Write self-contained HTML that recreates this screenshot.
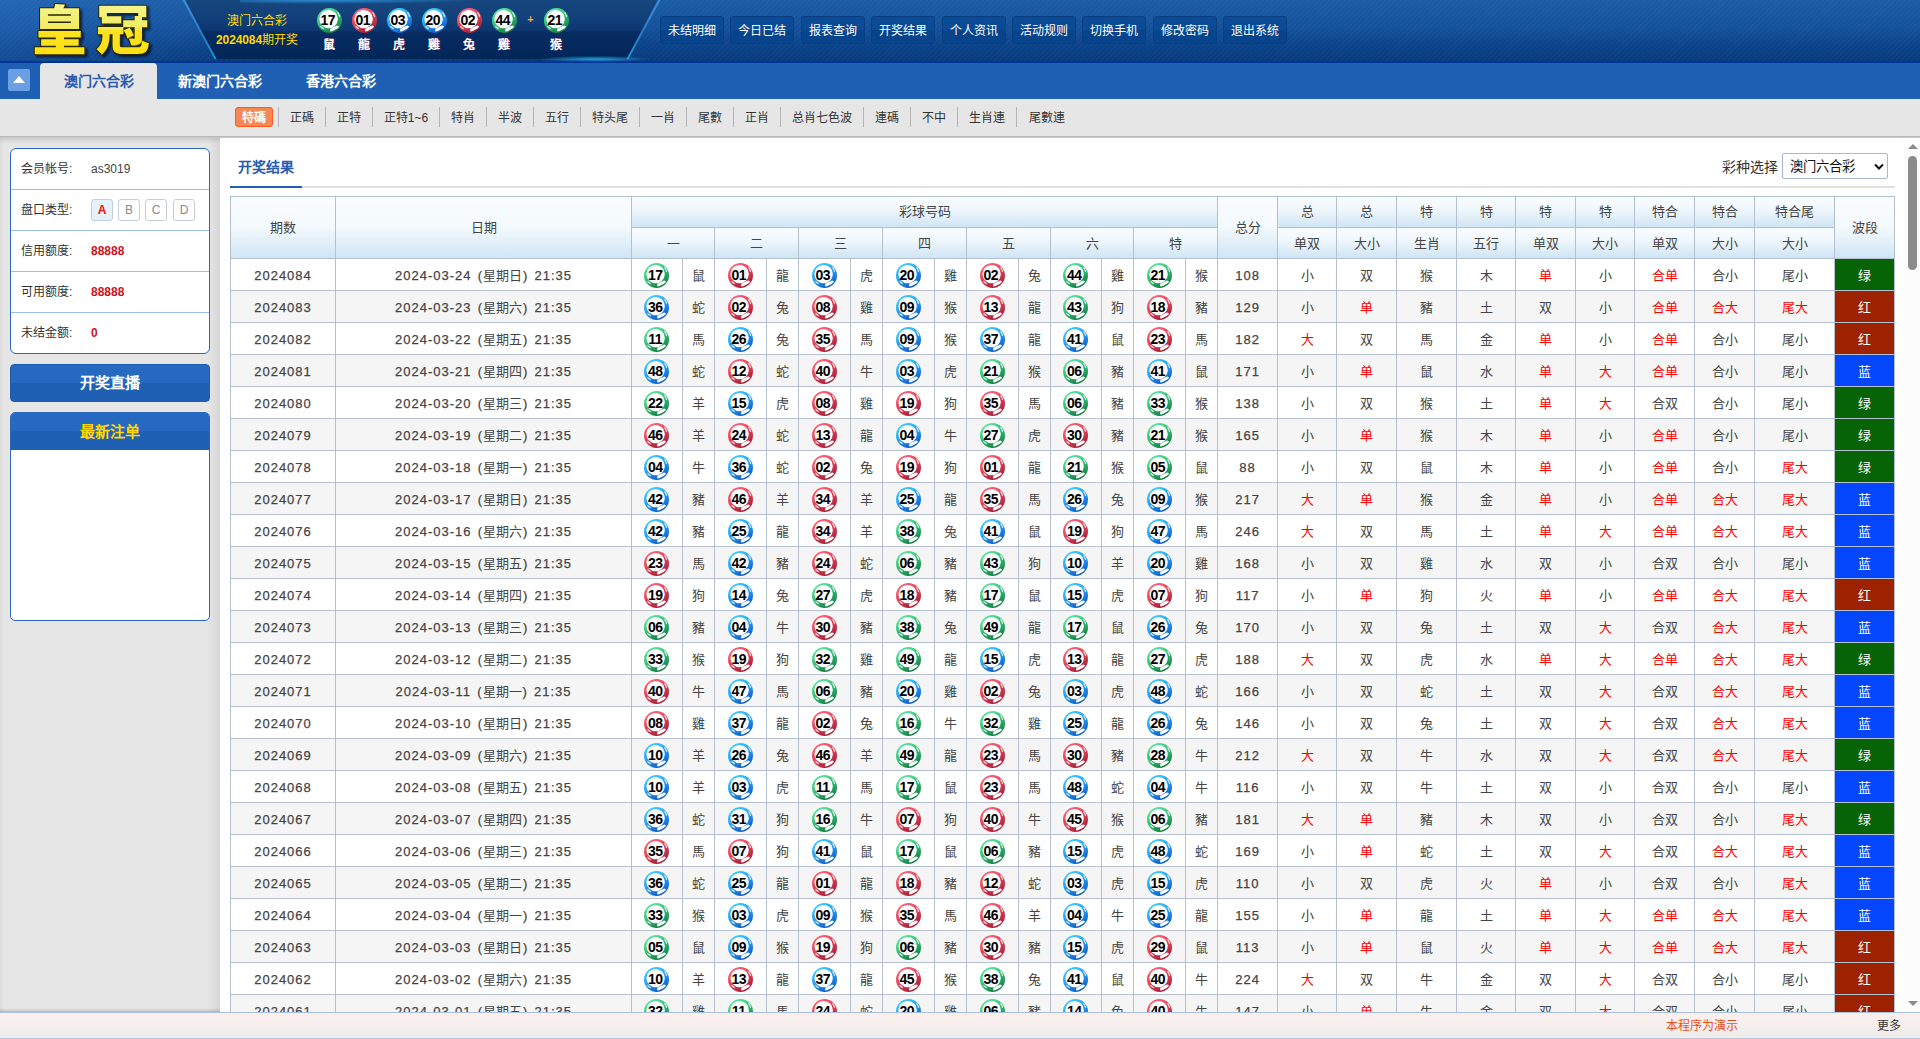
<!DOCTYPE html>
<html lang="zh-CN">
<head>
<meta charset="utf-8">
<title>皇冠</title>
<style>
*{box-sizing:border-box}
html,body{margin:0;padding:0;overflow:hidden}
body{width:1920px;height:1039px;overflow:hidden;position:relative;background:#e6e6e6;font-family:"Liberation Sans",sans-serif;font-size:12px;color:#444}
a{text-decoration:none;color:inherit}
i,em{font-style:normal}
/* ---------- header ---------- */
#hd{position:absolute;left:0;top:0;width:1920px;height:63px;background:#003399;overflow:hidden}
#hdbg{position:absolute;left:0;top:0;width:1920px;height:61px;
 background:repeating-linear-gradient(135deg,rgba(255,255,255,.025) 0,rgba(255,255,255,.025) 1.6px,rgba(255,255,255,0) 1.6px,rgba(255,255,255,0) 3.6px),linear-gradient(#1b5ca6 0,#14519b 45%,#0a4186 80%,#073a7b 100%)}
#hdl{position:absolute;left:0;top:0;width:230px;height:61px;background:linear-gradient(90deg,rgba(60,130,220,.25),rgba(60,130,220,.12) 60%,rgba(60,130,220,0))}
#pnE{position:absolute;left:180px;top:0;width:484px;height:61px;background:linear-gradient(#3d8fd6,#2a7ac8 60%,#1aa0e0);
 clip-path:polygon(2.5px 0,480.5px 0,448.5px 59px,34.5px 59px)}
#pn{position:absolute;left:180px;top:0;width:484px;height:60px;
 background:linear-gradient(#17477f 0,#12407a 30%,#0c3770 50%,#062c62 54%,#032658 100%);
 clip-path:polygon(5px 0,478px 0,446.5px 59px,36.5px 59px)}
#glow{position:absolute;left:240px;top:-4px;width:240px;height:8px;background:radial-gradient(ellipse at 35% 50%,rgba(50,160,235,.8) 0,rgba(50,160,235,.4) 35%,rgba(50,160,235,0) 70%)}
#glow2{position:absolute;left:540px;top:56px;width:110px;height:6px;background:radial-gradient(ellipse at center,rgba(40,175,230,.85) 0,rgba(40,175,230,.35) 45%,rgba(40,175,230,0) 72%)}
#logo{position:absolute;left:0;top:0}
.yt{position:absolute;left:187px;width:140px;text-align:center;color:#ffd800;font-size:12px;line-height:16px;white-space:nowrap}
.yt b{font-size:12px;letter-spacing:-.1px}
.hbw{position:absolute;top:8px;width:35px;height:50px;text-align:center}
.hbw .b{display:block;margin:0 auto}
.hbw em{display:block;margin:4px 0 0 -2px;font-size:12px;line-height:16px;font-weight:bold;color:#fff;text-shadow:1px 0 0 rgba(160,0,40,.55)}
#plus{position:absolute;left:524px;top:12px;width:13px;height:14px;line-height:14px;text-align:center;color:#f0b040;font-size:11px;font-weight:bold}
.nb{position:absolute;top:16px;width:64px;height:28px;border:1px solid #0a3e82;border-radius:3px;background:linear-gradient(#0b4b96 0,#0b4b96 50%,#07448c 50%,#07448c 100%);color:#fff;font-size:12px;line-height:28px;text-align:center;white-space:nowrap}
/* ---------- tabs ---------- */
#tabs{position:absolute;left:0;top:63px;width:1920px;height:36px;background:#2060b4}
#tg{position:absolute;left:8px;top:6px;width:22px;height:22px;border-radius:2px;background:#6a9fe4}
#tg:after{content:"";position:absolute;left:5px;top:7px;border:6px solid transparent;border-top:0;border-bottom:7px solid #fff}
.tab{position:absolute;top:0;height:36px;line-height:36px;font-size:14px;font-weight:bold;color:#fff;text-align:center;white-space:nowrap}
.tab.on{background:#e6e6e6;color:#2c5cb0;border-radius:4px 4px 0 0}
/* ---------- sub nav ---------- */
#sub{position:absolute;left:0;top:99px;width:1920px;height:37px;background:#e6e6e6}
#subsh{position:absolute;left:0;top:136px;width:1920px;height:2px;background:linear-gradient(#b2b2b2,#cfcfcf)}
.si{position:absolute;top:8px;height:20px;line-height:22px;border-right:1px solid #b4b4b4;text-align:center;font-size:12px;color:#333;white-space:nowrap}
.si.last{border-right:0}
.si.on b{display:inline-block;width:38px;height:20px;line-height:20px;border:1px solid #fb5d20;vertical-align:top;border-radius:3px;background:#f58855;color:#fff;font-weight:bold;margin-left:-3px}
/* ---------- sidebar ---------- */
#side{position:absolute;left:0;top:138px;width:220px;height:874px;background:linear-gradient(90deg,#dcdcdc 0,#e6e6e6 4px,#e6e6e6 208px,#d6d6d6 100%)}
#sidetop{position:absolute;left:0;top:0;width:220px;height:6px;background:linear-gradient(rgba(0,0,0,.10),rgba(0,0,0,0))}
#sidebot{position:absolute;left:0;bottom:0;width:220px;height:4px;background:linear-gradient(rgba(0,0,0,0),rgba(0,0,0,.07) 50%,rgba(0,0,0,.2))}
#ubox{position:absolute;left:10px;top:10px;width:200px;height:206px;background:#fff;border:1px solid #2a68c0;border-radius:6px;overflow:hidden}
.ur{position:relative;height:41px;border-bottom:1px solid #9dbdea;line-height:40px;padding-left:10px;font-size:12px;color:#333;white-space:nowrap}
.ur:last-child{border-bottom:0}
.ur .v{position:absolute;left:80px;top:0;color:#444}
.ur .v.red{color:#d0101c;font-weight:bold}
.pk{position:absolute;top:9px;width:22px;height:22px;border:1px solid #c3ced9;border-radius:3px;background:#fff;color:#8a8a8a;font-size:12px;line-height:20px;text-align:center}
.pk.on{background:#e6f1fa;color:#f01010;font-weight:bold}
.sbtn{position:absolute;left:10px;width:200px;height:38px;border-radius:4px;background:linear-gradient(#2569c0 0,#2569c0 50%,#2060b4 50%,#2060b4 100%);border:1px solid #1f5cb0;color:#fff;font-size:15px;font-weight:bold;line-height:36px;text-align:center}
#obox{position:absolute;left:10px;top:274px;width:200px;height:209px;background:#fff;border:1px solid #2a68c0;border-radius:5px;overflow:hidden}
#obox .h{height:37px;margin:-1px -1px 0 -1px;background:linear-gradient(#2569c0 0,#2569c0 50%,#2060b4 50%,#2060b4 100%);color:#ffd800;font-size:15px;font-weight:bold;line-height:39px;text-align:center;height:38px}
/* ---------- main ---------- */
#main{position:absolute;left:220px;top:138px;width:1700px;height:874px;background:#fff;overflow:hidden}
#sbar{position:absolute;right:0;top:0;width:17px;height:874px;background:#fcfcfc}
#sbar .th{position:absolute;left:5px;top:18px;width:9px;height:114px;border-radius:5px;background:#8b8b8b}
#sbar .up{position:absolute;left:4.5px;top:6px;border:5px solid transparent;border-top:0;border-bottom:5px solid #8b8b8b}
#sbar .dn{position:absolute;left:4.5px;bottom:6px;border:5px solid transparent;border-bottom:0;border-top:5px solid #8b8b8b}
#ttl{position:absolute;left:10px;top:14px;width:72px;height:36px;border-bottom:2px solid #2060b4;font-size:14px;font-weight:bold;color:#2a5db0;line-height:30px;padding-left:8px;white-space:nowrap}
#tline{position:absolute;left:82px;top:48px;width:1593px;height:2px;background:#e0e0e0}
#sel{position:absolute;left:1502px;top:21px;font-size:14px;line-height:16px;color:#333;white-space:nowrap}
#selbox{position:absolute;left:1562px;top:15px;width:106px;height:26px;border:1px solid #a9b8cc;border-radius:2px;background:#fff;font-size:13.33px;line-height:26px;color:#111;padding-left:7px;white-space:nowrap}
#selbox svg{position:absolute;right:1px;top:8px}
table{position:absolute;left:10px;top:58px;width:1665px;border-collapse:separate;border-spacing:0;table-layout:fixed;border-left:1px solid #b4bfcf;border-top:1px solid #b4bfcf;font-size:13px;color:#444}
td,th{border-right:1px solid #b4bfcf;border-bottom:1px solid #b4bfcf;text-align:center;vertical-align:middle;padding:0;white-space:nowrap;overflow:hidden;font-weight:normal}
th{height:31px;padding-bottom:2px;background:linear-gradient(#fafdff 0,#eef6fc 45%,#cfe5f5 100%);color:#444}
thead tr:first-child th{padding-bottom:4px}
thead tr:first-child th.r2,th.r2{height:62px;padding-bottom:2px;background:linear-gradient(#fafdff 0,#f3f9fd 50%,#cfe5f5 100%)}
td{height:32px;line-height:29px;padding-top:2px}
tbody tr:nth-child(even) td{background:#f5f5f5}
td.n{letter-spacing:1px;word-spacing:1.5px;-webkit-text-stroke:.25px #444}
td.n u{letter-spacing:0;text-decoration:none;margin-right:1px;-webkit-text-stroke:0}
td.rd{color:#f00}
td.wg{background:#066306 !important;color:#fff}
td.wr{background:#9d2300 !important;color:#fff}
td.wb{background:#0446fb !important;color:#fff}
/* balls */
.b{display:inline-block;position:relative;z-index:0;width:25px;height:25px;vertical-align:middle;font-size:14px;font-weight:bold;line-height:24px;letter-spacing:-.5px;color:#000;text-align:center;padding-right:2.5px;left:-.5px}
.b svg{position:absolute;left:0;top:0;z-index:-1}
td.bc{line-height:0;font-size:0}
/* footer */
#ft{position:absolute;left:0;top:1012px;width:1920px;height:27px;border-top:1px solid #a9bfe3;border-bottom:1px solid #b9c8e0;background:linear-gradient(#fdf0ee 0,#f6efee 50%,#eeecec 100%);font-size:12px;line-height:27px}
#ft .m{position:absolute;left:1666px;color:#e8501a}
#ft .r{position:absolute;left:1877px;color:#333}
</style>
</head>
<body>
<svg width="0" height="0" style="position:absolute;left:-10px;top:-10px" aria-hidden="true">
 <defs>
  <linearGradient id="gg" x1=".25" y1="0" x2=".8" y2="1"><stop offset="0" stop-color="#5ae8a2"/><stop offset=".45" stop-color="#35bf78"/><stop offset=".8" stop-color="#1c8e50"/><stop offset="1" stop-color="#0c743a"/></linearGradient>
  <linearGradient id="gr" x1=".25" y1="0" x2=".8" y2="1"><stop offset="0" stop-color="#ff6278"/><stop offset=".45" stop-color="#e2445a"/><stop offset=".8" stop-color="#b42840"/><stop offset="1" stop-color="#9a1c30"/></linearGradient>
  <linearGradient id="gb" x1=".25" y1="0" x2=".8" y2="1"><stop offset="0" stop-color="#3cd0ff"/><stop offset=".45" stop-color="#28a0f0"/><stop offset=".8" stop-color="#146cd4"/><stop offset="1" stop-color="#0a54bc"/></linearGradient>
  <linearGradient id="gt" x1="0" y1="0" x2="1" y2="1"><stop offset="0" stop-color="#fff" stop-opacity=".95"/><stop offset="1" stop-color="#fff" stop-opacity=".15"/></linearGradient>
  <g id="bh">
   <circle cx="11.6" cy="11.1" r="9.2" fill="#fff"/>
   <path d="M13.2 19.9 L20.3 17.2 L21.6 18.4 L13.4 22.6 Z" fill="#fff" opacity=".55"/>
   <ellipse cx="17.4" cy="20.6" rx="5" ry="1.45" transform="rotate(-28.6 17.4 20.6)" fill="#fff"/>
   <ellipse cx="5.1" cy="19.6" rx="2.4" ry=".75" transform="rotate(36 5.1 19.6)" fill="#fff" opacity=".75"/>
   <ellipse cx="21.2" cy="5.3" rx="1.3" ry=".7" transform="rotate(58 21.2 5.3)" fill="#fff" opacity=".8"/>
   <ellipse cx="22.3" cy="7.6" rx="1.5" ry=".7" transform="rotate(66 22.3 7.6)" fill="#fff" opacity=".8"/>
  </g>
  <symbol id="bg" viewBox="0 0 25 25"><circle cx="12.5" cy="12.5" r="12.5" fill="url(#gg)"/><use href="#bh"/></symbol>
  <symbol id="br" viewBox="0 0 25 25"><circle cx="12.5" cy="12.5" r="12.5" fill="url(#gr)"/><use href="#bh"/></symbol>
  <symbol id="bb" viewBox="0 0 25 25"><circle cx="12.5" cy="12.5" r="12.5" fill="url(#gb)"/><use href="#bh"/></symbol>
 </defs>
</svg>
<div id="hd">
 <div id="hdbg"></div><div id="hdl"></div>
 <div id="pnE"></div><div id="pn"></div><div id="glow"></div><div id="glow2"></div>
 <svg id="logo" width="180" height="62" viewBox="0 0 180 62" role="img" aria-label="皇冠"><title>皇冠</title>
  <defs>
   <linearGradient id="lgg" gradientUnits="userSpaceOnUse" x1="0" y1="29" x2="0" y2="960"><stop offset="0" stop-color="#f5f48c"/><stop offset=".47" stop-color="#f2ec62"/><stop offset=".545" stop-color="#fbe31e"/><stop offset="1" stop-color="#fbe019"/></linearGradient>
   <filter id="lsh" x="-10%" y="-10%" width="130%" height="130%"><feDropShadow dx="2.2" dy="2.2" stdDeviation="1.3" flood-color="#000" flood-opacity=".6"/></filter>
   <path id="lg1" d="M286 353H710V385H286ZM286 219H710V250H286ZM42 834V960H961V834H584V803H854V684H584V651H894V529H110V651H432V684H160V803H432V834ZM418 29C415 53 409 81 402 108H140V496H863V108H572C582 87 592 64 601 40Z"/><path id="lg2" d="M516 519C546 564 576 627 586 668L704 615C691 574 660 516 628 473ZM721 251V332H509V456H40V590H124V613C124 691 113 794 13 871C39 889 94 944 113 971C231 876 258 727 258 616V590H312V790C312 920 360 958 534 958C571 958 738 958 777 958C925 958 965 917 985 755C947 747 889 727 858 706C849 817 838 833 769 833C724 833 579 833 542 833C460 833 447 828 447 789V590H513V461H721V659C721 670 717 674 704 674C691 674 648 674 612 672C630 707 650 761 655 797C719 798 768 795 807 775C847 755 857 721 857 661V461H955V332H857V275H937V65H65V275H113V391H474V258H207V199H787V251Z"/>
  </defs>
  <g filter="url(#lsh)" fill="#2a2600" stroke="#2a2600" stroke-width="37" stroke-linejoin="round">
   <use href="#lg1" transform="translate(32.5 2.33) scale(0.054)"/><use href="#lg2" transform="translate(95.7 2.33) scale(0.054)"/>
  </g>
  <g fill="url(#lgg)">
   <use href="#lg1" transform="translate(32.5 2.33) scale(0.054)"/><use href="#lg2" transform="translate(95.7 2.33) scale(0.054)"/>
  </g>
 </svg>
 <div class="yt" style="top:13px">澳门六合彩</div>
 <div class="yt" style="top:32px"><b>2024084</b>期开奖</div>
 <span class="hbw" style="left:312.0px"><i class="b"><svg width="25" height="25"><use href="#bg"/></svg>17</i><em>鼠</em></span><span class="hbw" style="left:347.0px"><i class="b"><svg width="25" height="25"><use href="#br"/></svg>01</i><em>龍</em></span><span class="hbw" style="left:382.0px"><i class="b"><svg width="25" height="25"><use href="#bb"/></svg>03</i><em>虎</em></span><span class="hbw" style="left:417.0px"><i class="b"><svg width="25" height="25"><use href="#bb"/></svg>20</i><em>雞</em></span><span class="hbw" style="left:452.0px"><i class="b"><svg width="25" height="25"><use href="#br"/></svg>02</i><em>兔</em></span><span class="hbw" style="left:487.0px"><i class="b"><svg width="25" height="25"><use href="#bg"/></svg>44</i><em>雞</em></span><span class="hbw" style="left:539.0px"><i class="b"><svg width="25" height="25"><use href="#bg"/></svg>21</i><em>猴</em></span>
 <div id="plus">+</div>
 <a class="nb" style="left:660.0px">未结明细</a><a class="nb" style="left:730.4px">今日已结</a><a class="nb" style="left:800.8px">报表查询</a><a class="nb" style="left:871.2px">开奖结果</a><a class="nb" style="left:941.6px">个人资讯</a><a class="nb" style="left:1012.0px">活动规则</a><a class="nb" style="left:1082.4px">切换手机</a><a class="nb" style="left:1152.8px">修改密码</a><a class="nb" style="left:1223.2px">退出系统</a>
</div>
<div id="tabs">
 <div id="tg"></div>
 <a class="tab on" style="left:40px;width:117px">澳门六合彩</a>
 <a class="tab" style="left:157px;width:126px">新澳门六合彩</a>
 <a class="tab" style="left:283px;width:116px">香港六合彩</a>
</div>
<div id="sub"><span class="si on" style="left:232.0px;width:47px"><b>特碼</b></span><span class="si" style="left:279.0px;width:47px">正碼</span><span class="si" style="left:326.0px;width:47px">正特</span><span class="si" style="left:373.0px;width:67px">正特1~6</span><span class="si" style="left:440.0px;width:47px">特肖</span><span class="si" style="left:487.0px;width:47px">半波</span><span class="si" style="left:534.0px;width:47px">五行</span><span class="si" style="left:581.0px;width:59px">特头尾</span><span class="si" style="left:640.0px;width:47px">一肖</span><span class="si" style="left:687.0px;width:47px">尾數</span><span class="si" style="left:734.0px;width:47px">正肖</span><span class="si" style="left:781.0px;width:83px">总肖七色波</span><span class="si" style="left:864.0px;width:47px">連碼</span><span class="si" style="left:911.0px;width:47px">不中</span><span class="si" style="left:958.0px;width:59px">生肖連</span><span class="si last" style="left:1017.0px;width:59px">尾數連</span></div>
<div id="subsh"></div>
<div id="side">
 <div id="sidetop"></div><div id="sidebot"></div>
 <div id="ubox">
  <div class="ur">会员帐号:<span class="v">as3019</span></div>
  <div class="ur">盘口类型:<span class="pk on" style="left:80px">A</span><span class="pk" style="left:107px">B</span><span class="pk" style="left:134px">C</span><span class="pk" style="left:162px">D</span></div>
  <div class="ur">信用额度:<span class="v red">88888</span></div>
  <div class="ur">可用额度:<span class="v red">88888</span></div>
  <div class="ur">未结金额:<span class="v red">0</span></div>
 </div>
 <a class="sbtn" style="top:226px">开奖直播</a>
 <div id="obox"><div class="h">最新注单</div></div>
</div>
<div id="main">
 <div id="ttl">开奖结果</div><div id="tline"></div>
 <div id="sel">彩种选择</div>
 <div id="selbox">澳门六合彩<svg width="14" height="10" viewBox="0 0 14 10"><path d="M3 2.5 L7 6.5 L11 2.5" fill="none" stroke="#111" stroke-width="2"/></svg></div>
 <table>
  <colgroup>
   <col style="width:105px"><col style="width:296px">
   <col style="width:51px"><col style="width:32px"><col style="width:52px"><col style="width:32px"><col style="width:52px"><col style="width:32px"><col style="width:52px"><col style="width:32px"><col style="width:52px"><col style="width:32px"><col style="width:51px"><col style="width:32px"><col style="width:52px"><col style="width:32px">
   <col style="width:60px"><col style="width:59px"><col style="width:60px"><col style="width:60px"><col style="width:59px"><col style="width:60px"><col style="width:59px"><col style="width:60px"><col style="width:60px"><col style="width:80px"><col style="width:60px">
  </colgroup>
  <thead>
   <tr><th class="r2" rowspan="2">期数</th><th class="r2" rowspan="2">日期</th><th colspan="14">彩球号码</th><th class="r2" rowspan="2">总分</th><th>总</th><th>总</th><th>特</th><th>特</th><th>特</th><th>特</th><th>特合</th><th>特合</th><th>特合尾</th><th class="r2" rowspan="2">波段</th></tr>
   <tr><th colspan="2">一</th><th colspan="2">二</th><th colspan="2">三</th><th colspan="2">四</th><th colspan="2">五</th><th colspan="2">六</th><th colspan="2">特</th><th>单双</th><th>大小</th><th>生肖</th><th>五行</th><th>单双</th><th>大小</th><th>单双</th><th>大小</th><th>大小</th></tr>
  </thead>
  <tbody>
<tr><td class="n">2024084</td><td class="n">2024-03-24 (<u>星期日</u>) 21:35</td><td class="bc"><i class="b"><svg width="25" height="25"><use href="#bg"/></svg>17</i></td><td>鼠</td><td class="bc"><i class="b"><svg width="25" height="25"><use href="#br"/></svg>01</i></td><td>龍</td><td class="bc"><i class="b"><svg width="25" height="25"><use href="#bb"/></svg>03</i></td><td>虎</td><td class="bc"><i class="b"><svg width="25" height="25"><use href="#bb"/></svg>20</i></td><td>雞</td><td class="bc"><i class="b"><svg width="25" height="25"><use href="#br"/></svg>02</i></td><td>兔</td><td class="bc"><i class="b"><svg width="25" height="25"><use href="#bg"/></svg>44</i></td><td>雞</td><td class="bc"><i class="b"><svg width="25" height="25"><use href="#bg"/></svg>21</i></td><td>猴</td><td class="n">108</td><td>小</td><td>双</td><td>猴</td><td>木</td><td class="rd">单</td><td>小</td><td class="rd">合单</td><td>合小</td><td>尾小</td><td class="wg">绿</td></tr>
<tr><td class="n">2024083</td><td class="n">2024-03-23 (<u>星期六</u>) 21:35</td><td class="bc"><i class="b"><svg width="25" height="25"><use href="#bb"/></svg>36</i></td><td>蛇</td><td class="bc"><i class="b"><svg width="25" height="25"><use href="#br"/></svg>02</i></td><td>兔</td><td class="bc"><i class="b"><svg width="25" height="25"><use href="#br"/></svg>08</i></td><td>雞</td><td class="bc"><i class="b"><svg width="25" height="25"><use href="#bb"/></svg>09</i></td><td>猴</td><td class="bc"><i class="b"><svg width="25" height="25"><use href="#br"/></svg>13</i></td><td>龍</td><td class="bc"><i class="b"><svg width="25" height="25"><use href="#bg"/></svg>43</i></td><td>狗</td><td class="bc"><i class="b"><svg width="25" height="25"><use href="#br"/></svg>18</i></td><td>豬</td><td class="n">129</td><td>小</td><td class="rd">单</td><td>豬</td><td>土</td><td>双</td><td>小</td><td class="rd">合单</td><td class="rd">合大</td><td class="rd">尾大</td><td class="wr">红</td></tr>
<tr><td class="n">2024082</td><td class="n">2024-03-22 (<u>星期五</u>) 21:35</td><td class="bc"><i class="b"><svg width="25" height="25"><use href="#bg"/></svg>11</i></td><td>馬</td><td class="bc"><i class="b"><svg width="25" height="25"><use href="#bb"/></svg>26</i></td><td>兔</td><td class="bc"><i class="b"><svg width="25" height="25"><use href="#br"/></svg>35</i></td><td>馬</td><td class="bc"><i class="b"><svg width="25" height="25"><use href="#bb"/></svg>09</i></td><td>猴</td><td class="bc"><i class="b"><svg width="25" height="25"><use href="#bb"/></svg>37</i></td><td>龍</td><td class="bc"><i class="b"><svg width="25" height="25"><use href="#bb"/></svg>41</i></td><td>鼠</td><td class="bc"><i class="b"><svg width="25" height="25"><use href="#br"/></svg>23</i></td><td>馬</td><td class="n">182</td><td class="rd">大</td><td>双</td><td>馬</td><td>金</td><td class="rd">单</td><td>小</td><td class="rd">合单</td><td>合小</td><td>尾小</td><td class="wr">红</td></tr>
<tr><td class="n">2024081</td><td class="n">2024-03-21 (<u>星期四</u>) 21:35</td><td class="bc"><i class="b"><svg width="25" height="25"><use href="#bb"/></svg>48</i></td><td>蛇</td><td class="bc"><i class="b"><svg width="25" height="25"><use href="#br"/></svg>12</i></td><td>蛇</td><td class="bc"><i class="b"><svg width="25" height="25"><use href="#br"/></svg>40</i></td><td>牛</td><td class="bc"><i class="b"><svg width="25" height="25"><use href="#bb"/></svg>03</i></td><td>虎</td><td class="bc"><i class="b"><svg width="25" height="25"><use href="#bg"/></svg>21</i></td><td>猴</td><td class="bc"><i class="b"><svg width="25" height="25"><use href="#bg"/></svg>06</i></td><td>豬</td><td class="bc"><i class="b"><svg width="25" height="25"><use href="#bb"/></svg>41</i></td><td>鼠</td><td class="n">171</td><td>小</td><td class="rd">单</td><td>鼠</td><td>水</td><td class="rd">单</td><td class="rd">大</td><td class="rd">合单</td><td>合小</td><td>尾小</td><td class="wb">蓝</td></tr>
<tr><td class="n">2024080</td><td class="n">2024-03-20 (<u>星期三</u>) 21:35</td><td class="bc"><i class="b"><svg width="25" height="25"><use href="#bg"/></svg>22</i></td><td>羊</td><td class="bc"><i class="b"><svg width="25" height="25"><use href="#bb"/></svg>15</i></td><td>虎</td><td class="bc"><i class="b"><svg width="25" height="25"><use href="#br"/></svg>08</i></td><td>雞</td><td class="bc"><i class="b"><svg width="25" height="25"><use href="#br"/></svg>19</i></td><td>狗</td><td class="bc"><i class="b"><svg width="25" height="25"><use href="#br"/></svg>35</i></td><td>馬</td><td class="bc"><i class="b"><svg width="25" height="25"><use href="#bg"/></svg>06</i></td><td>豬</td><td class="bc"><i class="b"><svg width="25" height="25"><use href="#bg"/></svg>33</i></td><td>猴</td><td class="n">138</td><td>小</td><td>双</td><td>猴</td><td>土</td><td class="rd">单</td><td class="rd">大</td><td>合双</td><td>合小</td><td>尾小</td><td class="wg">绿</td></tr>
<tr><td class="n">2024079</td><td class="n">2024-03-19 (<u>星期二</u>) 21:35</td><td class="bc"><i class="b"><svg width="25" height="25"><use href="#br"/></svg>46</i></td><td>羊</td><td class="bc"><i class="b"><svg width="25" height="25"><use href="#br"/></svg>24</i></td><td>蛇</td><td class="bc"><i class="b"><svg width="25" height="25"><use href="#br"/></svg>13</i></td><td>龍</td><td class="bc"><i class="b"><svg width="25" height="25"><use href="#bb"/></svg>04</i></td><td>牛</td><td class="bc"><i class="b"><svg width="25" height="25"><use href="#bg"/></svg>27</i></td><td>虎</td><td class="bc"><i class="b"><svg width="25" height="25"><use href="#br"/></svg>30</i></td><td>豬</td><td class="bc"><i class="b"><svg width="25" height="25"><use href="#bg"/></svg>21</i></td><td>猴</td><td class="n">165</td><td>小</td><td class="rd">单</td><td>猴</td><td>木</td><td class="rd">单</td><td>小</td><td class="rd">合单</td><td>合小</td><td>尾小</td><td class="wg">绿</td></tr>
<tr><td class="n">2024078</td><td class="n">2024-03-18 (<u>星期一</u>) 21:35</td><td class="bc"><i class="b"><svg width="25" height="25"><use href="#bb"/></svg>04</i></td><td>牛</td><td class="bc"><i class="b"><svg width="25" height="25"><use href="#bb"/></svg>36</i></td><td>蛇</td><td class="bc"><i class="b"><svg width="25" height="25"><use href="#br"/></svg>02</i></td><td>兔</td><td class="bc"><i class="b"><svg width="25" height="25"><use href="#br"/></svg>19</i></td><td>狗</td><td class="bc"><i class="b"><svg width="25" height="25"><use href="#br"/></svg>01</i></td><td>龍</td><td class="bc"><i class="b"><svg width="25" height="25"><use href="#bg"/></svg>21</i></td><td>猴</td><td class="bc"><i class="b"><svg width="25" height="25"><use href="#bg"/></svg>05</i></td><td>鼠</td><td class="n">88</td><td>小</td><td>双</td><td>鼠</td><td>木</td><td class="rd">单</td><td>小</td><td class="rd">合单</td><td>合小</td><td class="rd">尾大</td><td class="wg">绿</td></tr>
<tr><td class="n">2024077</td><td class="n">2024-03-17 (<u>星期日</u>) 21:35</td><td class="bc"><i class="b"><svg width="25" height="25"><use href="#bb"/></svg>42</i></td><td>豬</td><td class="bc"><i class="b"><svg width="25" height="25"><use href="#br"/></svg>46</i></td><td>羊</td><td class="bc"><i class="b"><svg width="25" height="25"><use href="#br"/></svg>34</i></td><td>羊</td><td class="bc"><i class="b"><svg width="25" height="25"><use href="#bb"/></svg>25</i></td><td>龍</td><td class="bc"><i class="b"><svg width="25" height="25"><use href="#br"/></svg>35</i></td><td>馬</td><td class="bc"><i class="b"><svg width="25" height="25"><use href="#bb"/></svg>26</i></td><td>兔</td><td class="bc"><i class="b"><svg width="25" height="25"><use href="#bb"/></svg>09</i></td><td>猴</td><td class="n">217</td><td class="rd">大</td><td class="rd">单</td><td>猴</td><td>金</td><td class="rd">单</td><td>小</td><td class="rd">合单</td><td class="rd">合大</td><td class="rd">尾大</td><td class="wb">蓝</td></tr>
<tr><td class="n">2024076</td><td class="n">2024-03-16 (<u>星期六</u>) 21:35</td><td class="bc"><i class="b"><svg width="25" height="25"><use href="#bb"/></svg>42</i></td><td>豬</td><td class="bc"><i class="b"><svg width="25" height="25"><use href="#bb"/></svg>25</i></td><td>龍</td><td class="bc"><i class="b"><svg width="25" height="25"><use href="#br"/></svg>34</i></td><td>羊</td><td class="bc"><i class="b"><svg width="25" height="25"><use href="#bg"/></svg>38</i></td><td>兔</td><td class="bc"><i class="b"><svg width="25" height="25"><use href="#bb"/></svg>41</i></td><td>鼠</td><td class="bc"><i class="b"><svg width="25" height="25"><use href="#br"/></svg>19</i></td><td>狗</td><td class="bc"><i class="b"><svg width="25" height="25"><use href="#bb"/></svg>47</i></td><td>馬</td><td class="n">246</td><td class="rd">大</td><td>双</td><td>馬</td><td>土</td><td class="rd">单</td><td class="rd">大</td><td class="rd">合单</td><td class="rd">合大</td><td class="rd">尾大</td><td class="wb">蓝</td></tr>
<tr><td class="n">2024075</td><td class="n">2024-03-15 (<u>星期五</u>) 21:35</td><td class="bc"><i class="b"><svg width="25" height="25"><use href="#br"/></svg>23</i></td><td>馬</td><td class="bc"><i class="b"><svg width="25" height="25"><use href="#bb"/></svg>42</i></td><td>豬</td><td class="bc"><i class="b"><svg width="25" height="25"><use href="#br"/></svg>24</i></td><td>蛇</td><td class="bc"><i class="b"><svg width="25" height="25"><use href="#bg"/></svg>06</i></td><td>豬</td><td class="bc"><i class="b"><svg width="25" height="25"><use href="#bg"/></svg>43</i></td><td>狗</td><td class="bc"><i class="b"><svg width="25" height="25"><use href="#bb"/></svg>10</i></td><td>羊</td><td class="bc"><i class="b"><svg width="25" height="25"><use href="#bb"/></svg>20</i></td><td>雞</td><td class="n">168</td><td>小</td><td>双</td><td>雞</td><td>水</td><td>双</td><td>小</td><td>合双</td><td>合小</td><td>尾小</td><td class="wb">蓝</td></tr>
<tr><td class="n">2024074</td><td class="n">2024-03-14 (<u>星期四</u>) 21:35</td><td class="bc"><i class="b"><svg width="25" height="25"><use href="#br"/></svg>19</i></td><td>狗</td><td class="bc"><i class="b"><svg width="25" height="25"><use href="#bb"/></svg>14</i></td><td>兔</td><td class="bc"><i class="b"><svg width="25" height="25"><use href="#bg"/></svg>27</i></td><td>虎</td><td class="bc"><i class="b"><svg width="25" height="25"><use href="#br"/></svg>18</i></td><td>豬</td><td class="bc"><i class="b"><svg width="25" height="25"><use href="#bg"/></svg>17</i></td><td>鼠</td><td class="bc"><i class="b"><svg width="25" height="25"><use href="#bb"/></svg>15</i></td><td>虎</td><td class="bc"><i class="b"><svg width="25" height="25"><use href="#br"/></svg>07</i></td><td>狗</td><td class="n">117</td><td>小</td><td class="rd">单</td><td>狗</td><td>火</td><td class="rd">单</td><td>小</td><td class="rd">合单</td><td class="rd">合大</td><td class="rd">尾大</td><td class="wr">红</td></tr>
<tr><td class="n">2024073</td><td class="n">2024-03-13 (<u>星期三</u>) 21:35</td><td class="bc"><i class="b"><svg width="25" height="25"><use href="#bg"/></svg>06</i></td><td>豬</td><td class="bc"><i class="b"><svg width="25" height="25"><use href="#bb"/></svg>04</i></td><td>牛</td><td class="bc"><i class="b"><svg width="25" height="25"><use href="#br"/></svg>30</i></td><td>豬</td><td class="bc"><i class="b"><svg width="25" height="25"><use href="#bg"/></svg>38</i></td><td>兔</td><td class="bc"><i class="b"><svg width="25" height="25"><use href="#bg"/></svg>49</i></td><td>龍</td><td class="bc"><i class="b"><svg width="25" height="25"><use href="#bg"/></svg>17</i></td><td>鼠</td><td class="bc"><i class="b"><svg width="25" height="25"><use href="#bb"/></svg>26</i></td><td>兔</td><td class="n">170</td><td>小</td><td>双</td><td>兔</td><td>土</td><td>双</td><td class="rd">大</td><td>合双</td><td class="rd">合大</td><td class="rd">尾大</td><td class="wb">蓝</td></tr>
<tr><td class="n">2024072</td><td class="n">2024-03-12 (<u>星期二</u>) 21:35</td><td class="bc"><i class="b"><svg width="25" height="25"><use href="#bg"/></svg>33</i></td><td>猴</td><td class="bc"><i class="b"><svg width="25" height="25"><use href="#br"/></svg>19</i></td><td>狗</td><td class="bc"><i class="b"><svg width="25" height="25"><use href="#bg"/></svg>32</i></td><td>雞</td><td class="bc"><i class="b"><svg width="25" height="25"><use href="#bg"/></svg>49</i></td><td>龍</td><td class="bc"><i class="b"><svg width="25" height="25"><use href="#bb"/></svg>15</i></td><td>虎</td><td class="bc"><i class="b"><svg width="25" height="25"><use href="#br"/></svg>13</i></td><td>龍</td><td class="bc"><i class="b"><svg width="25" height="25"><use href="#bg"/></svg>27</i></td><td>虎</td><td class="n">188</td><td class="rd">大</td><td>双</td><td>虎</td><td>水</td><td class="rd">单</td><td class="rd">大</td><td class="rd">合单</td><td class="rd">合大</td><td class="rd">尾大</td><td class="wg">绿</td></tr>
<tr><td class="n">2024071</td><td class="n">2024-03-11 (<u>星期一</u>) 21:35</td><td class="bc"><i class="b"><svg width="25" height="25"><use href="#br"/></svg>40</i></td><td>牛</td><td class="bc"><i class="b"><svg width="25" height="25"><use href="#bb"/></svg>47</i></td><td>馬</td><td class="bc"><i class="b"><svg width="25" height="25"><use href="#bg"/></svg>06</i></td><td>豬</td><td class="bc"><i class="b"><svg width="25" height="25"><use href="#bb"/></svg>20</i></td><td>雞</td><td class="bc"><i class="b"><svg width="25" height="25"><use href="#br"/></svg>02</i></td><td>兔</td><td class="bc"><i class="b"><svg width="25" height="25"><use href="#bb"/></svg>03</i></td><td>虎</td><td class="bc"><i class="b"><svg width="25" height="25"><use href="#bb"/></svg>48</i></td><td>蛇</td><td class="n">166</td><td>小</td><td>双</td><td>蛇</td><td>土</td><td>双</td><td class="rd">大</td><td>合双</td><td class="rd">合大</td><td class="rd">尾大</td><td class="wb">蓝</td></tr>
<tr><td class="n">2024070</td><td class="n">2024-03-10 (<u>星期日</u>) 21:35</td><td class="bc"><i class="b"><svg width="25" height="25"><use href="#br"/></svg>08</i></td><td>雞</td><td class="bc"><i class="b"><svg width="25" height="25"><use href="#bb"/></svg>37</i></td><td>龍</td><td class="bc"><i class="b"><svg width="25" height="25"><use href="#br"/></svg>02</i></td><td>兔</td><td class="bc"><i class="b"><svg width="25" height="25"><use href="#bg"/></svg>16</i></td><td>牛</td><td class="bc"><i class="b"><svg width="25" height="25"><use href="#bg"/></svg>32</i></td><td>雞</td><td class="bc"><i class="b"><svg width="25" height="25"><use href="#bb"/></svg>25</i></td><td>龍</td><td class="bc"><i class="b"><svg width="25" height="25"><use href="#bb"/></svg>26</i></td><td>兔</td><td class="n">146</td><td>小</td><td>双</td><td>兔</td><td>土</td><td>双</td><td class="rd">大</td><td>合双</td><td class="rd">合大</td><td class="rd">尾大</td><td class="wb">蓝</td></tr>
<tr><td class="n">2024069</td><td class="n">2024-03-09 (<u>星期六</u>) 21:35</td><td class="bc"><i class="b"><svg width="25" height="25"><use href="#bb"/></svg>10</i></td><td>羊</td><td class="bc"><i class="b"><svg width="25" height="25"><use href="#bb"/></svg>26</i></td><td>兔</td><td class="bc"><i class="b"><svg width="25" height="25"><use href="#br"/></svg>46</i></td><td>羊</td><td class="bc"><i class="b"><svg width="25" height="25"><use href="#bg"/></svg>49</i></td><td>龍</td><td class="bc"><i class="b"><svg width="25" height="25"><use href="#br"/></svg>23</i></td><td>馬</td><td class="bc"><i class="b"><svg width="25" height="25"><use href="#br"/></svg>30</i></td><td>豬</td><td class="bc"><i class="b"><svg width="25" height="25"><use href="#bg"/></svg>28</i></td><td>牛</td><td class="n">212</td><td class="rd">大</td><td>双</td><td>牛</td><td>水</td><td>双</td><td class="rd">大</td><td>合双</td><td class="rd">合大</td><td class="rd">尾大</td><td class="wg">绿</td></tr>
<tr><td class="n">2024068</td><td class="n">2024-03-08 (<u>星期五</u>) 21:35</td><td class="bc"><i class="b"><svg width="25" height="25"><use href="#bb"/></svg>10</i></td><td>羊</td><td class="bc"><i class="b"><svg width="25" height="25"><use href="#bb"/></svg>03</i></td><td>虎</td><td class="bc"><i class="b"><svg width="25" height="25"><use href="#bg"/></svg>11</i></td><td>馬</td><td class="bc"><i class="b"><svg width="25" height="25"><use href="#bg"/></svg>17</i></td><td>鼠</td><td class="bc"><i class="b"><svg width="25" height="25"><use href="#br"/></svg>23</i></td><td>馬</td><td class="bc"><i class="b"><svg width="25" height="25"><use href="#bb"/></svg>48</i></td><td>蛇</td><td class="bc"><i class="b"><svg width="25" height="25"><use href="#bb"/></svg>04</i></td><td>牛</td><td class="n">116</td><td>小</td><td>双</td><td>牛</td><td>土</td><td>双</td><td>小</td><td>合双</td><td>合小</td><td>尾小</td><td class="wb">蓝</td></tr>
<tr><td class="n">2024067</td><td class="n">2024-03-07 (<u>星期四</u>) 21:35</td><td class="bc"><i class="b"><svg width="25" height="25"><use href="#bb"/></svg>36</i></td><td>蛇</td><td class="bc"><i class="b"><svg width="25" height="25"><use href="#bb"/></svg>31</i></td><td>狗</td><td class="bc"><i class="b"><svg width="25" height="25"><use href="#bg"/></svg>16</i></td><td>牛</td><td class="bc"><i class="b"><svg width="25" height="25"><use href="#br"/></svg>07</i></td><td>狗</td><td class="bc"><i class="b"><svg width="25" height="25"><use href="#br"/></svg>40</i></td><td>牛</td><td class="bc"><i class="b"><svg width="25" height="25"><use href="#br"/></svg>45</i></td><td>猴</td><td class="bc"><i class="b"><svg width="25" height="25"><use href="#bg"/></svg>06</i></td><td>豬</td><td class="n">181</td><td class="rd">大</td><td class="rd">单</td><td>豬</td><td>木</td><td>双</td><td>小</td><td>合双</td><td>合小</td><td class="rd">尾大</td><td class="wg">绿</td></tr>
<tr><td class="n">2024066</td><td class="n">2024-03-06 (<u>星期三</u>) 21:35</td><td class="bc"><i class="b"><svg width="25" height="25"><use href="#br"/></svg>35</i></td><td>馬</td><td class="bc"><i class="b"><svg width="25" height="25"><use href="#br"/></svg>07</i></td><td>狗</td><td class="bc"><i class="b"><svg width="25" height="25"><use href="#bb"/></svg>41</i></td><td>鼠</td><td class="bc"><i class="b"><svg width="25" height="25"><use href="#bg"/></svg>17</i></td><td>鼠</td><td class="bc"><i class="b"><svg width="25" height="25"><use href="#bg"/></svg>06</i></td><td>豬</td><td class="bc"><i class="b"><svg width="25" height="25"><use href="#bb"/></svg>15</i></td><td>虎</td><td class="bc"><i class="b"><svg width="25" height="25"><use href="#bb"/></svg>48</i></td><td>蛇</td><td class="n">169</td><td>小</td><td class="rd">单</td><td>蛇</td><td>土</td><td>双</td><td class="rd">大</td><td>合双</td><td class="rd">合大</td><td class="rd">尾大</td><td class="wb">蓝</td></tr>
<tr><td class="n">2024065</td><td class="n">2024-03-05 (<u>星期二</u>) 21:35</td><td class="bc"><i class="b"><svg width="25" height="25"><use href="#bb"/></svg>36</i></td><td>蛇</td><td class="bc"><i class="b"><svg width="25" height="25"><use href="#bb"/></svg>25</i></td><td>龍</td><td class="bc"><i class="b"><svg width="25" height="25"><use href="#br"/></svg>01</i></td><td>龍</td><td class="bc"><i class="b"><svg width="25" height="25"><use href="#br"/></svg>18</i></td><td>豬</td><td class="bc"><i class="b"><svg width="25" height="25"><use href="#br"/></svg>12</i></td><td>蛇</td><td class="bc"><i class="b"><svg width="25" height="25"><use href="#bb"/></svg>03</i></td><td>虎</td><td class="bc"><i class="b"><svg width="25" height="25"><use href="#bb"/></svg>15</i></td><td>虎</td><td class="n">110</td><td>小</td><td>双</td><td>虎</td><td>火</td><td class="rd">单</td><td>小</td><td>合双</td><td>合小</td><td class="rd">尾大</td><td class="wb">蓝</td></tr>
<tr><td class="n">2024064</td><td class="n">2024-03-04 (<u>星期一</u>) 21:35</td><td class="bc"><i class="b"><svg width="25" height="25"><use href="#bg"/></svg>33</i></td><td>猴</td><td class="bc"><i class="b"><svg width="25" height="25"><use href="#bb"/></svg>03</i></td><td>虎</td><td class="bc"><i class="b"><svg width="25" height="25"><use href="#bb"/></svg>09</i></td><td>猴</td><td class="bc"><i class="b"><svg width="25" height="25"><use href="#br"/></svg>35</i></td><td>馬</td><td class="bc"><i class="b"><svg width="25" height="25"><use href="#br"/></svg>46</i></td><td>羊</td><td class="bc"><i class="b"><svg width="25" height="25"><use href="#bb"/></svg>04</i></td><td>牛</td><td class="bc"><i class="b"><svg width="25" height="25"><use href="#bb"/></svg>25</i></td><td>龍</td><td class="n">155</td><td>小</td><td class="rd">单</td><td>龍</td><td>土</td><td class="rd">单</td><td class="rd">大</td><td class="rd">合单</td><td class="rd">合大</td><td class="rd">尾大</td><td class="wb">蓝</td></tr>
<tr><td class="n">2024063</td><td class="n">2024-03-03 (<u>星期日</u>) 21:35</td><td class="bc"><i class="b"><svg width="25" height="25"><use href="#bg"/></svg>05</i></td><td>鼠</td><td class="bc"><i class="b"><svg width="25" height="25"><use href="#bb"/></svg>09</i></td><td>猴</td><td class="bc"><i class="b"><svg width="25" height="25"><use href="#br"/></svg>19</i></td><td>狗</td><td class="bc"><i class="b"><svg width="25" height="25"><use href="#bg"/></svg>06</i></td><td>豬</td><td class="bc"><i class="b"><svg width="25" height="25"><use href="#br"/></svg>30</i></td><td>豬</td><td class="bc"><i class="b"><svg width="25" height="25"><use href="#bb"/></svg>15</i></td><td>虎</td><td class="bc"><i class="b"><svg width="25" height="25"><use href="#br"/></svg>29</i></td><td>鼠</td><td class="n">113</td><td>小</td><td class="rd">单</td><td>鼠</td><td>火</td><td class="rd">单</td><td class="rd">大</td><td class="rd">合单</td><td class="rd">合大</td><td class="rd">尾大</td><td class="wr">红</td></tr>
<tr><td class="n">2024062</td><td class="n">2024-03-02 (<u>星期六</u>) 21:35</td><td class="bc"><i class="b"><svg width="25" height="25"><use href="#bb"/></svg>10</i></td><td>羊</td><td class="bc"><i class="b"><svg width="25" height="25"><use href="#br"/></svg>13</i></td><td>龍</td><td class="bc"><i class="b"><svg width="25" height="25"><use href="#bb"/></svg>37</i></td><td>龍</td><td class="bc"><i class="b"><svg width="25" height="25"><use href="#br"/></svg>45</i></td><td>猴</td><td class="bc"><i class="b"><svg width="25" height="25"><use href="#bg"/></svg>38</i></td><td>兔</td><td class="bc"><i class="b"><svg width="25" height="25"><use href="#bb"/></svg>41</i></td><td>鼠</td><td class="bc"><i class="b"><svg width="25" height="25"><use href="#br"/></svg>40</i></td><td>牛</td><td class="n">224</td><td class="rd">大</td><td>双</td><td>牛</td><td>金</td><td>双</td><td class="rd">大</td><td>合双</td><td>合小</td><td>尾小</td><td class="wr">红</td></tr>
<tr><td class="n">2024061</td><td class="n">2024-03-01 (<u>星期五</u>) 21:35</td><td class="bc"><i class="b"><svg width="25" height="25"><use href="#bg"/></svg>32</i></td><td>雞</td><td class="bc"><i class="b"><svg width="25" height="25"><use href="#bg"/></svg>11</i></td><td>馬</td><td class="bc"><i class="b"><svg width="25" height="25"><use href="#br"/></svg>24</i></td><td>蛇</td><td class="bc"><i class="b"><svg width="25" height="25"><use href="#bb"/></svg>20</i></td><td>雞</td><td class="bc"><i class="b"><svg width="25" height="25"><use href="#bg"/></svg>06</i></td><td>豬</td><td class="bc"><i class="b"><svg width="25" height="25"><use href="#bb"/></svg>14</i></td><td>兔</td><td class="bc"><i class="b"><svg width="25" height="25"><use href="#br"/></svg>40</i></td><td>牛</td><td class="n">147</td><td>小</td><td class="rd">单</td><td>牛</td><td>金</td><td>双</td><td class="rd">大</td><td>合双</td><td>合小</td><td>尾小</td><td class="wr">红</td></tr>
  </tbody>
 </table>
 <div id="sbar"><div class="up"></div><div class="th"></div><div class="dn"></div></div>
</div>
<div id="ft"><span class="m">本程序为演示</span><span class="r">更多</span></div>
</body>
</html>
